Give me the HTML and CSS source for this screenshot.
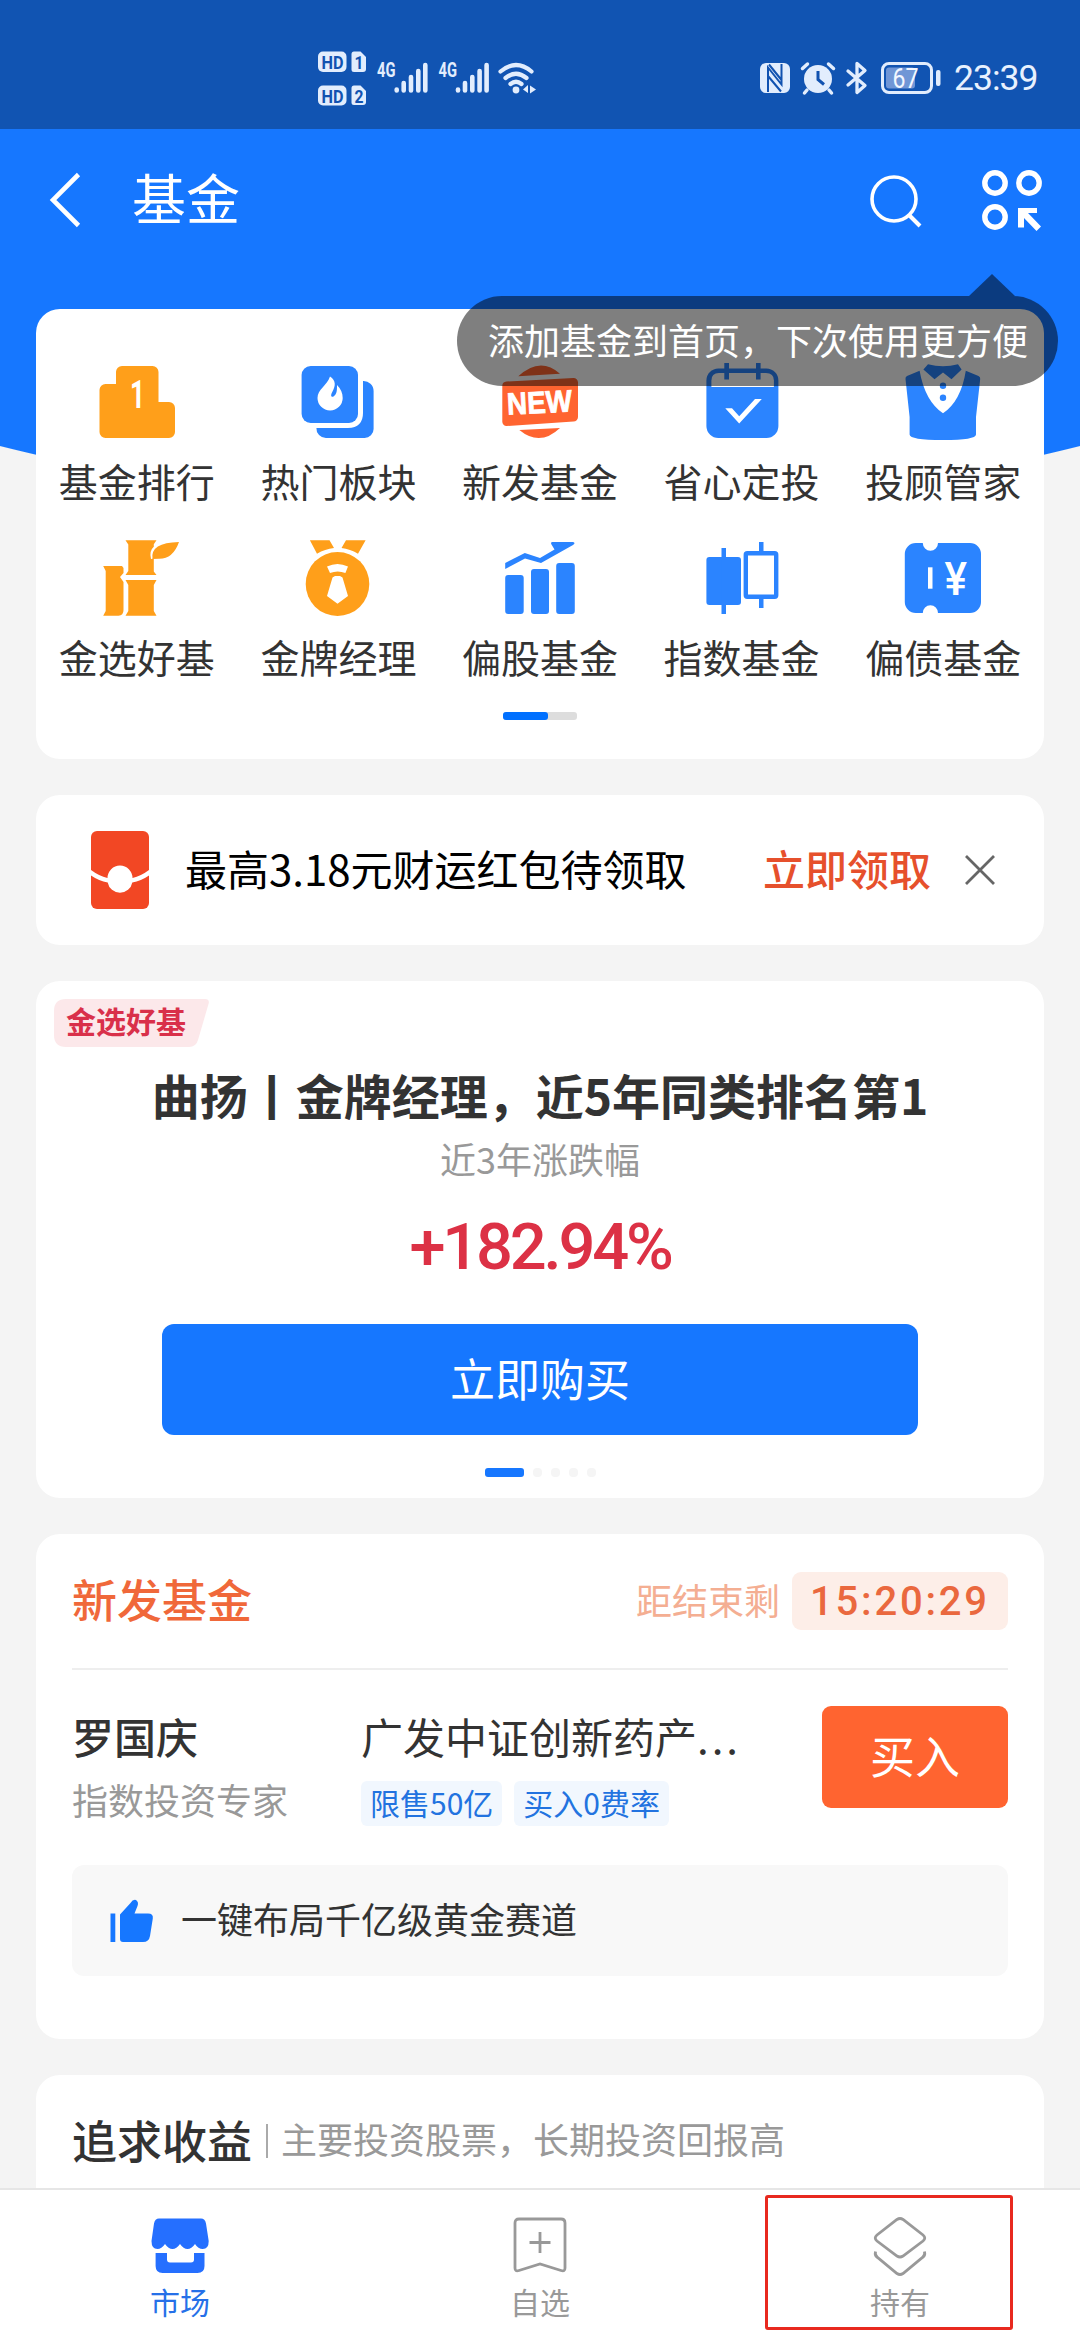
FILE: index.html
```html
<!DOCTYPE html>
<html lang="zh-CN">
<head>
<meta charset="utf-8">
<title>基金</title>
<link rel="stylesheet" href="styles.css">
</head>
<body>
<div class="page">
  <div class="status">
    <svg class="status-left" width="222" height="62" viewBox="0 0 222 62">
      <g fill="#e2edfd">
        <rect x="0" y="6.500" width="28.500" height="20.500" rx="5"/>
        <path d="M36 6.500h6.500l5.500 5.500v12a3 3 0 0 1-3 3h-9a2.500 2.500 0 0 1-2.500-2.500V9a2.500 2.500 0 0 1 2.500-2.500z"/>
        <rect x="0" y="40.500" width="28.500" height="20" rx="5"/>
        <path d="M36 40.500h6.500l5.500 5.500v11a3 3 0 0 1-3 3h-9a2.500 2.500 0 0 1-2.500-2.500V43a2.500 2.500 0 0 1 2.500-2.500z"/>
      </g>
      <g class="hd" fill="#1152b0">
        <text x="3.500" y="23.500" textLength="22" lengthAdjust="spacingAndGlyphs">HD</text>
        <text x="36.500" y="23.500" textLength="9" lengthAdjust="spacingAndGlyphs">1</text>
        <text x="3.500" y="57.500" textLength="22" lengthAdjust="spacingAndGlyphs">HD</text>
        <text x="36.500" y="57.500" textLength="9" lengthAdjust="spacingAndGlyphs">2</text>
      </g>
      <g class="net" fill="#e2edfd">
        <text x="59" y="31.500" textLength="18.500" lengthAdjust="spacingAndGlyphs">4G</text>
        <text x="120.500" y="31.500" textLength="18.500" lengthAdjust="spacingAndGlyphs">4G</text>
      </g>
      <g stroke="#e2edfd" stroke-width="4.600" stroke-linecap="round" fill="none">
        <path d="M78.700 44.500v1M85.700 38v7.500M93 32v13.500M100.300 26v19.500M107.300 20v25.500"/>
        <path d="M140 44.500v1M147 38v7.500M154.300 32v13.500M161.600 26v19.500M168.600 20v25.500"/>
        <path d="M182.500 26.500q15.500-13 31 0M187.500 33q10.500-8.500 21 0M192.500 39q5.500-4.500 11 0" stroke-width="4.200"/>
      </g>
      <g fill="#e2edfd"><circle cx="198" cy="45" r="3.400"/><path d="M205 44.500l5-4.500v8zM212 40.500l6 4-6 4z"/></g>
    </svg>
    <div class="status-right">
      <svg width="30" height="30" viewBox="0 0 30 30"><rect width="30" height="30" rx="6" fill="#e2edfd"/><path d="M8 29V4.500l13.500 17V1M9 1.500L21.500 17M8 13l13 15.500" fill="none" stroke="#1152b0" stroke-width="2"/></svg>
      <svg width="34" height="32" viewBox="0 0 34 32"><circle cx="17" cy="17" r="14" fill="#e2edfd"/><path d="M1.500 6.500L6.500 2M32.500 6.500L27.500 2M6 28l-2.500 3M28 28l2.500 3" stroke="#e2edfd" stroke-width="3.500" stroke-linecap="round"/><path d="M17 9v8.500l6 5" fill="none" stroke="#1152b0" stroke-width="3"/></svg>
      <svg width="22" height="34" viewBox="0 0 22 34"><path d="M2 10l17 14.500-8 7V2.500l8 7L2 24" fill="none" stroke="#e2edfd" stroke-width="3.300" stroke-linejoin="round" stroke-linecap="round"/></svg>
      <svg class="battery" width="60" height="32" viewBox="0 0 60 32"><rect x="1.500" y="1.500" width="49" height="29" rx="6.500" fill="none" stroke="#e2edfd" stroke-width="3"/><rect x="5" y="5.500" width="29" height="21" rx="3" fill="#7096d6"/><rect x="55" y="8" width="4.500" height="16" rx="2" fill="#e2edfd"/><text x="11.500" y="25.500" textLength="26" lengthAdjust="spacingAndGlyphs" fill="#f2f7ff">67</text></svg>
      <span class="clock">23:39</span>
    </div>
  </div>

  <div class="nav">
    <svg width="32" height="54" viewBox="0 0 32 54"><path d="M29.500 1.500L4 27l25.500 25.500" fill="none" stroke="#fff" stroke-width="4.600"/></svg>
    <h1 class="nav-title">基金</h1>
    <svg class="nav-search" width="54" height="54" viewBox="0 0 54 54"><circle cx="25" cy="25" r="22" fill="none" stroke="#fff" stroke-width="3.600"/><path d="M40 41l11 11" stroke="#fff" stroke-width="4"/></svg>
    <div class="nav-more">
      <svg width="62" height="64" viewBox="0 0 62 64"><g fill="none" stroke="#fff" stroke-width="5.400"><circle cx="14" cy="15" r="10.200"/><circle cx="48" cy="15" r="10.200"/><circle cx="14" cy="49" r="10.200"/></g><path d="M37 40h19v5h-9l13 13.500-4.500 4.500L43 50v9.500h-6z" fill="#fff"/></svg>
      <div class="tooltip">添加基金到首页，下次使用更方便</div>
    </div>
  </div>

  <main class="cards">
    <section class="card menu-card">
      <div class="menu">
        <div class="menu-item">
          <svg width="80" height="80" viewBox="0 0 80 80"><path d="M25 4h30.500a6 6 0 0 1 6 6v30H72a6 6 0 0 1 6 6v24a6 6 0 0 1-6 6H8.500a6 6 0 0 1-6-6V28a6 6 0 0 1 6-6H19V10a6 6 0 0 1 6-6z" fill="#ff9f1a"/><text class="rank-one" x="33" y="46" textLength="15" lengthAdjust="spacingAndGlyphs" fill="#fff">1</text></svg>
          <span>基金排行</span>
        </div>
        <div class="menu-item">
          <svg width="80" height="80" viewBox="0 0 80 80"><rect x="3.600" y="4" width="56.400" height="57" rx="9" fill="#2b84ff"/><path d="M65 19a10 10 0 0 1 10.600 10v38a9 9 0 0 1-9 9H28a9.500 9.500 0 0 1-9.600-10H50Q65 65.500 65 51z" fill="#2b84ff"/><path d="M32 14.500c6 4 6 9 2 16-2 4 0 5 1.500 4 3.500-2.500 3.500-5.500 3.500-11.500 4 4 5.700 8 5.700 13a12.600 12.500 0 0 1-25.200 0c0-9 9.500-12 12.500-21.500z" fill="#fff"/></svg>
          <span>热门板块</span>
        </div>
        <div class="menu-item">
          <svg width="80" height="80" viewBox="0 0 80 80"><g fill="#ff6430"><path d="M18.300 14.300Q40-6 60 11.700zM19.300 68L60 66Q40 85 19.300 68zM6.500 19.500L73.500 16a4.500 4.500 0 0 1 4.500 4.500V55a4.500 4.500 0 0 1-4.500 4.500L6.500 64a4.200 4.200 0 0 1-4.200-4.200V24a4.500 4.500 0 0 1 4.200-4.500z"/></g><text class="new-word" transform="rotate(-3 40 40)" x="7" y="51" textLength="65" lengthAdjust="spacingAndGlyphs" fill="#fff">NEW</text></svg>
          <span>新发基金</span>
        </div>
        <div class="menu-item">
          <svg width="80" height="80" viewBox="0 0 80 80"><rect x="4.400" y="6.500" width="72" height="69.500" rx="12" fill="#2b84ff"/><path d="M9.400 25v-6.500q0-7.500 7.500-7.500h47q8 0 8 7.500V25z" fill="#fff"/><path d="M22.300 1H27v16.500h-4.700zM54 1h4.600v16.500H54z" fill="#2b84ff"/><path d="M23.300 46.300h6.700l7.200 8L53 37h6.800L37.200 61.500z" fill="#fff"/></svg>
          <span>省心定投</span>
        </div>
        <div class="menu-item">
          <svg width="80" height="80" viewBox="0 0 80 80"><g fill="#2b84ff"><path d="M16.600 8.700Q22 39 40 51.300 58 39 62.800 8.700L75.500 14q2 1 1.700 3L73 55v17.500Q73 78 40 78 6.600 78 6.600 72.500V55L2.500 17q-.3-2 1.500-3z"/><path d="M25 2.300q15 4 30 0l3.600 5.200L48.500 17.300 40 10.500l-8.500 6.800L20.400 7.500z"/><circle cx="40" cy="23.700" r="3.200"/><circle cx="40" cy="35.700" r="3.200"/></g></svg>
          <span>投顾管家</span>
        </div>
        <div class="menu-item">
          <svg width="84" height="80" viewBox="-2 0 84 80"><g fill="#ff9f1a"><path d="M28.500 2.300h31l-2.700 4v2.500Q52 13 54 21l2.800-.5v13l2.700 3.500h-31l2.800-4V6.500zM28.500 42h31l-2.700 5v26l2.700 4.700h-31l2.800-4.700V47zM6.200 28H25l1.500 2v5l-3.500 4 3.500 5v28q0 6-5.500 5.700H6.200L8.700 73V33z"/><path d="M82 4Q76 21 62 20.800L55.500 21Q53 4.500 82 4z"/></g></svg>
          <span>金选好基</span>
        </div>
        <div class="menu-item">
          <svg width="80" height="80" viewBox="0 0 80 80"><g fill="#ff9f1a"><path d="M11.900 2.300h19.600L36 10q-9 1-17 5.700zM48 2.300h19.600L60 15.700Q52 11 43.500 10z"/><ellipse cx="39.500" cy="46" rx="31.800" ry="32"/></g><path d="M29 28.500q10.500-5 21 0L47.400 35q-7.700-3-15.400 0zM37 38h5l2.500 1.500L50 58l-10.500 7.700L29 58l5.500-18.500z" fill="#fff"/></svg>
          <span>金牌经理</span>
        </div>
        <div class="menu-item">
          <svg width="80" height="80" viewBox="0 0 80 80"><g fill="#2b84ff"><rect x="5.200" y="37" width="18.500" height="39" rx="3"/><rect x="31" y="31" width="18" height="45" rx="3"/><rect x="56.200" y="25" width="18.600" height="51" rx="3"/><path d="M5.200 31v-6l19.600-10L40 20l14.500-8.500-3.300-5.500q-.5-2 1-2H73q3 1 0 3L41 25l-16-4.500z"/></g></svg>
          <span>偏股基金</span>
        </div>
        <div class="menu-item">
          <svg width="80" height="80" viewBox="0 0 80 80"><g fill="#2b84ff"><rect x="4.400" y="19" width="34.600" height="48" rx="3"/><path d="M19.500 10H24v66h-4.500zM57 4h4.500v10H57zM57 60h4.500v10H57z"/></g><rect x="43.800" y="15.200" width="30.400" height="43.600" rx="1.500" fill="none" stroke="#2b84ff" stroke-width="4.400"/></svg>
          <span>指数基金</span>
        </div>
        <div class="menu-item">
          <svg width="80" height="80" viewBox="0 0 80 80"><path d="M12.800 5h7a7.600 7.700 0 0 0 15.200 0h32a11 11 0 0 1 11 11v48a11 11 0 0 1-11 11H35a7.600 7.700 0 0 0-15.200 0h-7a11 11 0 0 1-11-11V16a11 11 0 0 1 11-11z" fill="#2b84ff"/><path d="M25 29.300h4.500v21.400H25z" fill="#fff"/><text class="yen" x="41.500" y="56.500" textLength="22.500" lengthAdjust="spacingAndGlyphs" fill="#fff">¥</text></svg>
          <span>偏债基金</span>
        </div>
      </div>
      <div class="scroll-track"><div class="scroll-thumb"></div></div>
    </section>

    <section class="card promo">
      <svg width="58" height="78" viewBox="0 0 58 78"><rect width="58" height="78" rx="6" fill="#f24724"/><path d="M0 39q8 6 16.500 8a12.500 12.500 0 0 1 25 0Q50 45 58 39v5.500Q50 50 41.300 51.500a12.500 12.500 0 0 1-24.600 0Q8 50 0 44.500z" fill="#fff"/></svg>
      <p class="promo-text">最高3.18元财运红包待领取</p>
      <span class="promo-action">立即领取</span>
      <svg width="32" height="32" viewBox="0 0 32 32"><path d="M2 2l28 28M30 2L2 30" stroke="#666" stroke-width="2.800"/></svg>
    </section>

    <section class="card feature">
      <div class="tag"><svg class="tag-shape" width="155" height="48" viewBox="0 0 155 48"><path d="M12 0h139q5 0 3.500 5L144 41q-2 7-9 7H12Q0 48 0 36V12Q0 0 12 0z" fill="#fce8ea"/></svg><span>金选好基</span></div>
      <h2 class="feature-title">曲扬丨金牌经理，近5年同类排名第1</h2>
      <p class="feature-sub">近3年涨跌幅</p>
      <p class="feature-rate">+182.94%</p>
      <div class="feature-btn">立即购买</div>
      <div class="dots"><i class="on"></i><i></i><i></i><i></i><i></i></div>
    </section>

    <section class="card newfund">
      <div class="newfund-head">
        <h3>新发基金</h3>
        <span class="remain">距结束剩</span>
        <span class="timer">15:20:29</span>
      </div>
      <div class="newfund-row">
        <div class="manager"><b>罗国庆</b><small>指数投资专家</small></div>
        <div class="fund">
          <p>广发中证创新药产<span class="ellipsis">...</span></p>
          <div class="chips"><span>限售50亿</span><span>买入0费率</span></div>
        </div>
        <div class="buy">买入</div>
      </div>
      <div class="reason">
        <svg width="44" height="44" viewBox="0 0 44 44"><path d="M.5 14.500h4.800V43H.5zM10 15.500L20.500 4Q23 0 26 1q3 2 1.500 6l-3 7.500H38q5.500 0 4.800 5L40 37q-1 6-7 6H13q-3 0-3-3z" fill="#1677ff"/></svg>
        <span>一键布局千亿级黄金赛道</span>
      </div>
    </section>

    <section class="card goal">
      <h3>追求收益</h3><i></i><span>主要投资股票，长期投资回报高</span>
    </section>
  </main>

  <footer class="tabs">
    <div class="tab active">
      <svg width="60" height="60" viewBox="0 0 60 60"><path d="M9 1.500h42q4 0 5 5L58.700 24q0 8-6 8-4.500 0-7.700-5-3.500 5-7.500 5T30 27q-3.500 5-7.500 5T15 27q-3.500 5-7.500 5-6 0-6-8L4 6.500q1-5 5-5zM5.600 36H17v6.500q0 3 3 3h21q3 0 3-3V36h10.500v13q0 7-7 7H12.600q-7 0-7-7z" fill="#256fff"/></svg>
      <span>市场</span>
    </div>
    <div class="tab">
      <svg width="60" height="60" viewBox="0 0 60 60"><path d="M9 2h42q4 0 4 4v45q0 4-4 2.500L30 47 9 53.500Q5 55 5 51V6q0-4 4-4zM30 15v21M19.500 25.500h21" fill="none" stroke="#999" stroke-width="2.800"/></svg>
      <span>自选</span>
    </div>
    <div class="tab marked">
      <svg width="60" height="60" viewBox="0 0 60 60"><path d="M27 2.500q3-2 6 0l20 15.500q3.500 3 0 6L33 39q-3 2-6 0L7 24q-3.500-3 0-6zM5.500 34.500q-1 4 2 6L27 56.500q3 2 6 0l19.500-16q3-2 2-6" fill="none" stroke="#999" stroke-width="2.800"/></svg>
      <span>持有</span>
    </div>
  </footer>
</div>
</body>
</html>
```

FILE: styles.css
```css
*, *::before, *::after { box-sizing: border-box; margin: 0; padding: 0; }
body { font-family: "Noto Sans CJK SC", sans-serif; color: #333; background: #f4f4f4; }
svg { display: block; flex: none; overflow: visible; }
i { font-style: normal; }

.page {
  width: 1080px;
  height: 2340px;
  overflow: hidden;
  display: flex;
  flex-direction: column;
  background: radial-gradient(circle 2227px at 50% -1714px, #1677ff 2226px, #f4f4f4 2227px);
}

/* Status bar */
.status {
  flex: none;
  height: 129px;
  padding: 0 46px 0 318px;
  display: flex;
  justify-content: space-between;
  align-items: flex-start;
  background: #1154b2;
}
.status-left { margin-top: 45px; }
.hd text { font: 700 19px Roboto, sans-serif; }
.net text { font: 700 21px Roboto, sans-serif; }
.status-right { margin-top: 58px; height: 40px; display: flex; align-items: center; color: #e8f1fe; }
.status-right svg + svg { margin-left: 11px; }
.status-right svg.battery { margin-left: 13px; }
.battery text { font: 400 27px Roboto, sans-serif; }
.clock { width: 80px; margin-left: 13px; font: 400 35.5px/42px Roboto, sans-serif; letter-spacing: -1px; }

/* Title bar */
.nav {
  flex: none;
  height: 141px;
  padding: 1px 37px 0 49px;
  display: flex;
  align-items: center;
  color: #fff;
}
.nav-title { margin: -6px 0 0 51px; font-size: 54px; font-weight: 400; line-height: 70px; }
.nav-search { margin: 2px 58px 0 auto; }
.nav-more { position: relative; }
.tooltip {
  position: absolute;
  top: 128px;
  right: -15px;
  width: 601px;
  height: 90px;
  padding-left: 31px;
  font-size: 36px;
  line-height: 86px;
  white-space: nowrap;
  background: rgba(0, 0, 0, .5);
  border-radius: 45px;
  z-index: 2;
}
.tooltip::before {
  content: "";
  position: absolute;
  top: -22px;
  right: 43px;
  border: solid transparent;
  border-width: 0 23px 22px;
  border-bottom-color: rgba(0, 0, 0, .5);
}

/* Cards */
.cards { flex: 1; min-height: 0; padding: 39px 36px 0; overflow: hidden; display: flex; flex-direction: column; gap: 36px; }
.card { flex: none; background: #fff; border-radius: 24px; }

.menu-card { height: 450px; padding-top: 53px; }
.menu { display: grid; grid-template-columns: repeat(5, 1fr); row-gap: 33px; }
.menu-item { display: flex; flex-direction: column; align-items: center; gap: 13px; font-size: 39px; line-height: 50px; }
.rank-one { font: 700 38px Roboto, sans-serif; }
.new-word { font: 700 31px "Liberation Sans", sans-serif; stroke: #fff; stroke-width: .8px; }
.yen { font: 500 46px Roboto, sans-serif; }
.scroll-track { width: 74px; height: 8px; margin: 31px auto 0; border-radius: 3px; background: #ddd; }
.scroll-thumb { width: 45px; height: 8px; border-radius: 3px; background: #0070ff; }

.promo { height: 150px; padding: 0 48px 0 55px; display: flex; align-items: center; font-size: 42px; line-height: 60px; }
.promo-text { margin: -4px auto 0 36px; color: #000; }
.promo-action { margin: -4px 33px 0 0; color: #e6502c; font-weight: 500; }

.feature { height: 517px; padding-top: 18px; display: flex; flex-direction: column; align-items: center; }
.tag { position: relative; align-self: flex-start; width: 155px; height: 48px; margin-left: 18px; padding-left: 12px; font-size: 30px; font-weight: 700; line-height: 43px; color: #d9304a; }
.tag-shape { position: absolute; left: 0; top: 0; }
.tag span { position: relative; }
.feature-title { margin-top: 14px; font-size: 48px; font-weight: 700; line-height: 66px; }
.feature-sub { margin-top: 6px; font-size: 36px; line-height: 50px; color: #999; }
.feature-rate { margin-top: 24px; font: 500 65px/80px Roboto, sans-serif; letter-spacing: -3.2px; color: #dc3145; }
.feature-btn { width: 756px; height: 111px; margin-top: 37px; border-radius: 12px; background: #1677ff; color: #fff; font-size: 45px; line-height: 107px; text-align: center; }
.dots { display: flex; gap: 9px; margin-top: 33px; }
.dots i { width: 9px; height: 9px; border-radius: 4px; background: #f5f5f5; }
.dots .on { width: 39px; border-radius: 3px; background: #1677ff; }

.newfund { height: 505px; padding: 0 36px; }
.newfund-head { height: 136px; display: flex; align-items: center; border-bottom: 2px solid #eee; }
.newfund-head h3 { margin: -4px auto 0 0; font-size: 45px; font-weight: 500; line-height: 60px; color: #f0683a; }
.remain { margin: -4px 12px 0 0; font-size: 36px; color: #f4ae92; }
.timer { width: 216px; height: 58px; padding-left: 18px; border-radius: 9px; background: #fdeee8; font: 500 40px/59px Roboto, sans-serif; letter-spacing: 2.8px; color: #ea683e; }
.newfund-row { height: 195px; padding-top: 36px; display: flex; }
.manager { width: 289px; }
.manager b { display: block; font-size: 42px; font-weight: 500; line-height: 59px; }
.manager small { display: block; margin-top: 6px; font-size: 36px; line-height: 56px; color: #999; }
.fund { flex: 1; }
.fund p { font-size: 42px; line-height: 59px; }
.ellipsis { letter-spacing: 3px; }
.chips { display: flex; gap: 12px; margin-top: 16px; }
.chips span { height: 45px; padding: 0 9px; border-radius: 6px; background: #f1f7fe; font-size: 30px; line-height: 42px; color: #2273e0; }
.buy { width: 186px; height: 102px; border-radius: 9px; background: #ff6430; color: #fff; font-size: 45px; line-height: 97px; text-align: center; }
.reason { height: 111px; padding-left: 38px; display: flex; align-items: center; gap: 27px; border-radius: 12px; background: #f8f8f8; font-size: 36px; }
.reason span { margin-top: -5px; }

.goal { height: 150px; padding: 33px 36px 0; display: flex; align-items: flex-start; }
.goal h3 { font-size: 45px; font-weight: 500; line-height: 64px; }
.goal i { width: 2px; height: 34px; margin: 16px 13px 0 14px; background: #aaa; }
.goal span { font-size: 36px; line-height: 60px; color: #999; }

/* Bottom tabs */
.tabs { flex: none; height: 152px; display: grid; grid-template-columns: repeat(3, 1fr); border-top: 2px solid #e6e6e6; background: #fff; }
.tab { position: relative; padding-top: 27px; display: flex; flex-direction: column; align-items: center; gap: 2px; font-size: 30px; line-height: 44px; color: #999; }
.tab.active { color: #2670e8; }
.tab.marked::after { content: ""; position: absolute; left: 45px; top: 5px; width: 248px; height: 135px; border: 3px solid #e8291f; border-radius: 3px; }
```
